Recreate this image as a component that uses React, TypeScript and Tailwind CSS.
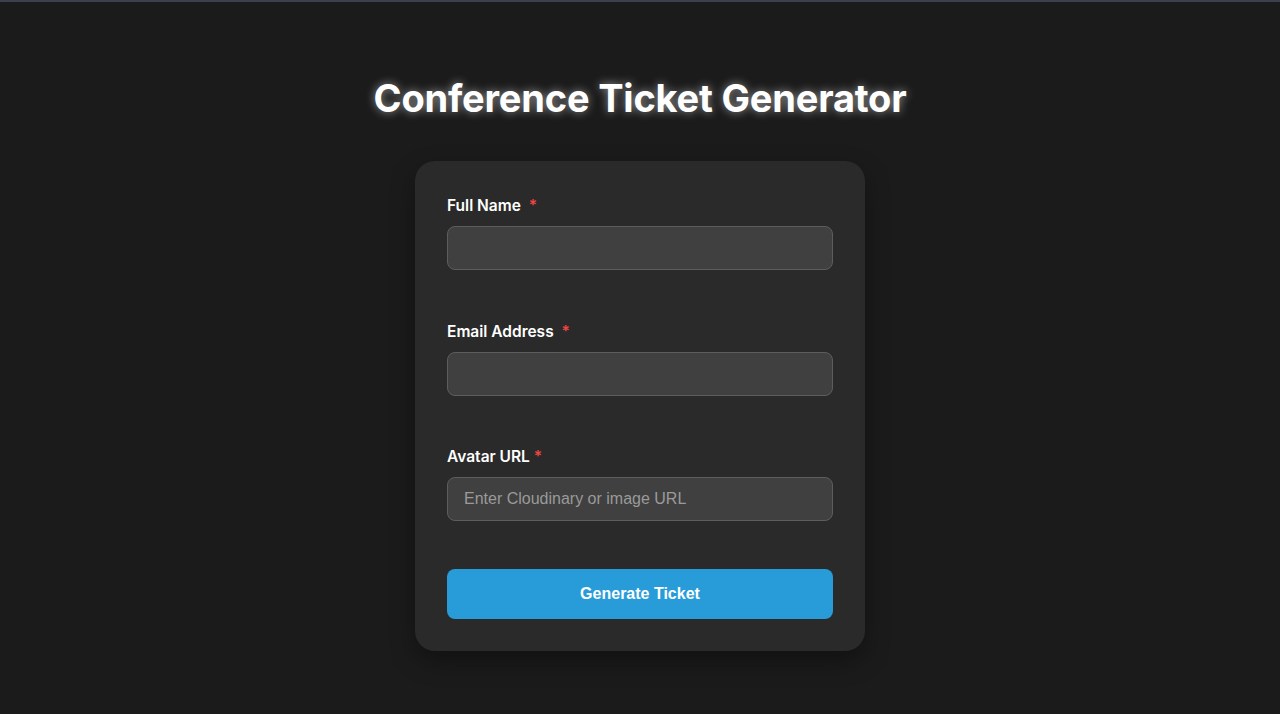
export default function App() {
  const fields = [
    { id: "name", label: "Full Name", gap: true, placeholder: "", mb: "mb-[49px]" },
    { id: "email", label: "Email Address", gap: true, placeholder: "", mb: "mb-12" },
    { id: "avatar", label: "Avatar URL", gap: false, placeholder: "Enter Cloudinary or image URL", mb: "mb-12" },
  ]

  return (
    <div className="min-h-screen bg-[#1b1b1b] border-t-2 border-[#3b4150] font-['Inter',sans-serif] text-white">
      <div className="flex flex-col items-center pt-[73px] pb-16">
        <h1 className="text-[38px] font-bold leading-[46px] tracking-[-0.2px] [text-shadow:0_0_10px_rgba(255,255,255,0.55)]">
          Conference Ticket Generator
        </h1>

        <form className="mt-[40px] w-[450px] rounded-[20px] bg-[#2a2a2a] p-8 shadow-[0_10px_25px_rgba(0,0,0,0.35)]">
          {fields.map((f) => (
            <div key={f.id} className={`flex flex-col ${f.mb}`}>
              <label htmlFor={f.id} className="mb-[9px] pt-px text-[15.5px] font-semibold leading-6 text-white">
                {f.label}{" "}
                <span className={`text-[#ef4444] ${f.gap ? "ml-1" : ""}`}>*</span>
              </label>
              <input
                id={f.id}
                type="text"
                placeholder={f.placeholder}
                className="-mt-px h-11 w-full rounded-lg border border-[#5d5d5d] bg-[#404040] px-4 font-['Liberation_Sans',Arial,sans-serif] text-base text-white outline-none placeholder:text-[#9a9a9a]"
              />
            </div>
          ))}
          <button
            type="button"
            className="block h-[50px] w-full rounded-lg bg-[#289cd8] font-['Liberation_Sans',Arial,sans-serif] text-base font-bold text-white"
          >
            Generate Ticket
          </button>
        </form>
      </div>
    </div>
  )
}
